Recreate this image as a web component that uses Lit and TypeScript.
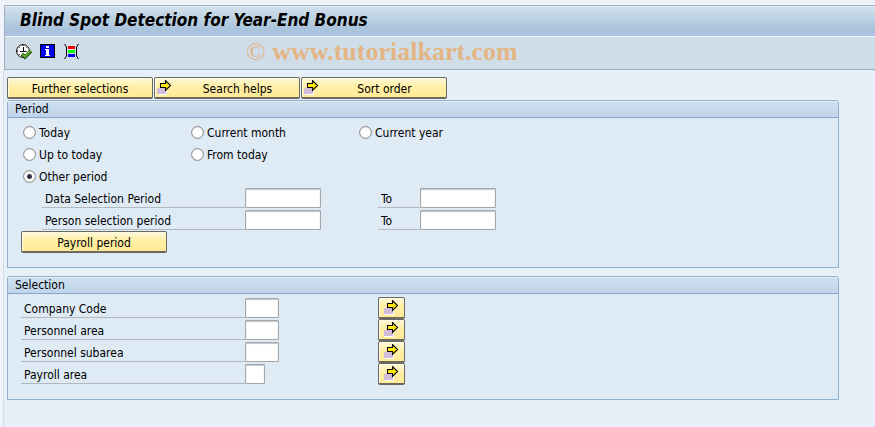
import { LitElement, html, css, svg, nothing } from "lit";
import { customElement, property } from "lit/decorators.js";

const arrowIcon = html`<svg class="arrow" width="15" height="15" viewBox="0 0 15 15" aria-hidden="true">
  <rect x="1" y="8" width="9" height="7" fill="#fff" />
  <rect x="0" y="8" width="9" height="6" fill="#d3bddb" />
  <path d="M3.5 3.5H8.5V.5L13.5 5.5L8.5 10.5V7.5H3.5Z" fill="#ffe900" stroke="#000" stroke-width="1.1" />
</svg>`;

const executeIcon = svg`<svg width="16" height="16" viewBox="0 0 16 16" aria-hidden="true">
  <circle cx="7" cy="7" r="6.4" fill="#fff" stroke="#000" />
  <path d="M7 1v1M7 12v1M1 7h1M3 3l.6 .6M11 3l-.6 .6M3 11l.6-.6" stroke="#000" />
  <path d="M7.5 3V7.5M4 7.5H10.5" stroke="#000" fill="none" />
  <path d="M6 10L9 13L15 7" stroke="#17380f" stroke-width="3.6" fill="none" />
  <path d="M6.5 10.2L9 12.6L14.8 6.8" stroke="#5cae2c" stroke-width="2.2" fill="none" />
</svg>`;

const infoIcon = svg`<svg width="16" height="16" viewBox="0 0 16 16" aria-hidden="true">
  <rect x="0" y="0" width="15" height="14" fill="#000" />
  <rect x="1" y="1" width="13" height="12" fill="#0000f0" />
  <path d="M6 2h3v2H6zM5 5h4v6h1v1H5v-1h1V6H5z" fill="#fff" />
</svg>`;

const variantIcon = svg`<svg width="16" height="16" viewBox="0 0 16 16" aria-hidden="true">
  <path d="M.5 0L2.5 3V12L.5 15M14.5 0L12.5 3V12L14.5 15" stroke="#000" fill="none" />
  <rect x="4" y="2" width="7" height="3" fill="#f00" />
  <rect x="4" y="6" width="7" height="3" fill="#0f0" />
  <rect x="4" y="10" width="7" height="3" fill="#00f" />
</svg>`;

const buttonStyles = css`
  button {
    box-sizing: border-box;
    height: 22px;
    margin: 0;
    padding: 0 2px;
    display: flex;
    align-items: center;
    font: inherit;
    color: #000;
    border: 1px solid #6b6a62;
    border-bottom-width: 2px;
    border-radius: 2px;
    background: linear-gradient(#fff8d8, #ffefa6 45%, #ffe995);
    box-shadow: inset 1px 1px 0 #fffbe8;
  }
  .arrow {
    flex: none;
  }
`;

@customElement("push-button")
class PushButton extends LitElement {
  @property() label = "";
  @property({ type: Boolean }) arrow = false;

  static styles = [
    buttonStyles,
    css`
      :host {
        display: block;
        width: 146px;
      }
      button {
        width: 100%;
        gap: 6px;
      }
      .text {
        flex: 1;
        padding-top: 2px;
        text-align: center;
      }
    `,
  ];

  render() {
    return html`<button type="button">
      ${this.arrow ? arrowIcon : nothing}<span class="text">${this.label}</span>
    </button>`;
  }
}

@customElement("group-box")
class GroupBox extends LitElement {
  @property() heading = "";

  static styles = css`
    :host {
      display: block;
      border: 1px solid #8fafd0;
      border-radius: 3px 3px 0 0;
      background: #deeaf4;
    }
    h2 {
      margin: 0;
      padding: 0 7px;
      font: inherit;
      line-height: 16px;
      border-bottom: 1px solid #88a4c8;
      border-radius: 2px 2px 0 0;
      background: linear-gradient(#cfdfef, #bfd5ea);
      box-shadow: inset 0 1px 0 #e4eef8;
    }
    .content {
      padding: 3px 13px 14px;
    }
  `;

  render() {
    return html`<h2>${this.heading}</h2>
      <div class="content"><slot></slot></div>`;
  }
}

const periods = [
  ["Today", "Current month", "Current year"],
  ["Up to today", "From today"],
  ["Other period"],
];

const ranges = ["Data Selection Period", "Person selection period"];

const criteria = [
  { label: "Company Code", size: "medium" },
  { label: "Personnel area", size: "medium" },
  { label: "Personnel subarea", size: "medium" },
  { label: "Payroll area", size: "small" },
];

@customElement("app-root")
class AppRoot extends LitElement {
  static styles = [
    buttonStyles,
    css`
      :host {
        display: flex;
        flex-direction: column;
        box-sizing: border-box;
        min-height: 100vh;
        padding: 5px 0 0 4px;
        background: #f0f4fa;
        color: #000;
        font: 12px/16px "DejaVu Sans Condensed", "Noto Sans", sans-serif;
      }
      header {
        border: 1px solid #a0b0c4;
        border-right: 0;
        background: #cfdde8;
      }
      h1 {
        margin: 0;
        padding: 0 15px 2px;
        font-size: 17px;
        font-style: italic;
        font-weight: bold;
        line-height: 28px;
        border-bottom: 1px solid #eef4fa;
        background: linear-gradient(#d3e1ee, #b9cfdf 50%, #abc4de 75%, #abc4de);
        box-shadow: inset 0 1px 0 #e4edf6;
      }
      .toolbar {
        display: flex;
        align-items: center;
        height: 30px;
        padding: 0 0 2px 11px;
        gap: 8px;
      }
      .tool {
        display: block;
        width: 16px;
        height: 16px;
        padding: 0;
        border: 0;
        border-radius: 0;
        background: none;
        box-shadow: none;
      }
      .tool svg {
        display: block;
      }
      .watermark {
        margin-left: 158px;
        font: bold 26px/30px "Liberation Serif", serif;
        color: #e3b584;
        white-space: nowrap;
      }
      .mark {
        font-weight: normal;
      }
      main {
        flex: 1;
        padding: 7px 36px 16px 3px;
        margin-left: -1px;
        border-left: 1px solid #d3dde8;
        background: #e8f0f7;
      }
      .actions {
        display: flex;
        gap: 1px;
        margin-bottom: 1px;
      }
      group-box + group-box {
        margin-top: 8px;
      }
      .choices {
        display: grid;
        grid-template-columns: repeat(3, 168px);
        height: 22px;
      }
      .choice {
        display: flex;
        align-items: center;
        gap: 3px;
        padding-left: 2px;
      }
      .name {
        padding-top: 2px;
      }
      input {
        box-sizing: border-box;
        margin: 0;
        appearance: none;
        background: #fff;
      }
      input[type="radio"] {
        width: 13px;
        height: 13px;
        border: 1px solid #8e8e90;
        border-radius: 50%;
        box-shadow: inset 0 0 1px #999;
      }
      input[type="radio"]:checked {
        background: radial-gradient(circle, #33344a 2px, #fff 3px);
      }
      .row {
        display: grid;
        grid-template-columns: 224px 133px 42px 76px;
        align-items: start;
        height: 22px;
      }
      .caption {
        height: 20px;
        padding-left: 3px;
        line-height: 24px;
        border-bottom: 1px solid #b3b8be;
      }
      .indented {
        margin-left: 21px;
      }
      input[type="text"] {
        width: 76px;
        height: 20px;
        margin-top: 1px;
        padding: 0 3px;
        font: inherit;
        border: 1px solid #a3a6aa;
        border-radius: 1px;
        box-shadow: inset 0 1px 1px #c4c6ca, inset 0 0 1px #d0d0d4;
      }
      input.medium {
        width: 34px;
      }
      input.small {
        width: 20px;
      }
      .more {
        width: 27px;
        padding: 0 0 0 5px;
      }
    `,
  ];

  render() {
    return html`
      <header>
        <h1>Blind Spot Detection for Year-End Bonus</h1>
        <div class="toolbar">
          <button type="button" class="tool" aria-label="Execute">${executeIcon}</button>
          <button type="button" class="tool" aria-label="Information">${infoIcon}</button>
          <button type="button" class="tool" aria-label="Variants">${variantIcon}</button>
          <span class="watermark"><span class="mark">©</span> www.tutorialkart.com</span>
        </div>
      </header>
      <main>
        <div class="actions">
          <push-button label="Further selections"></push-button>
          <push-button label="Search helps" arrow></push-button>
          <push-button label="Sort order" arrow></push-button>
        </div>
        <group-box heading="Period">
          ${periods.map(
            (row) => html`<div class="choices">
              ${row.map(
                (name) => html`<label class="choice">
                  <input type="radio" name="period" ?checked=${name === "Other period"} />
                  <span class="name">${name}</span>
                </label>`
              )}
            </div>`
          )}
          ${ranges.map(
            (name, i) => html`<div class="row">
              <label class="caption indented" for="from-${i}">${name}</label>
              <input type="text" id="from-${i}" />
              <label class="caption" for="to-${i}">To</label>
              <input type="text" id="to-${i}" />
            </div>`
          )}
          <push-button label="Payroll period"></push-button>
        </group-box>
        <group-box heading="Selection">
          ${criteria.map(
            ({ label, size }, i) => html`<div class="row">
              <label class="caption" for="criterion-${i}">${label}</label>
              <input type="text" class=${size} id="criterion-${i}" />
              <button type="button" class="more" aria-label="Multiple selection">${arrowIcon}</button>
            </div>`
          )}
        </group-box>
      </main>
    `;
  }
}
